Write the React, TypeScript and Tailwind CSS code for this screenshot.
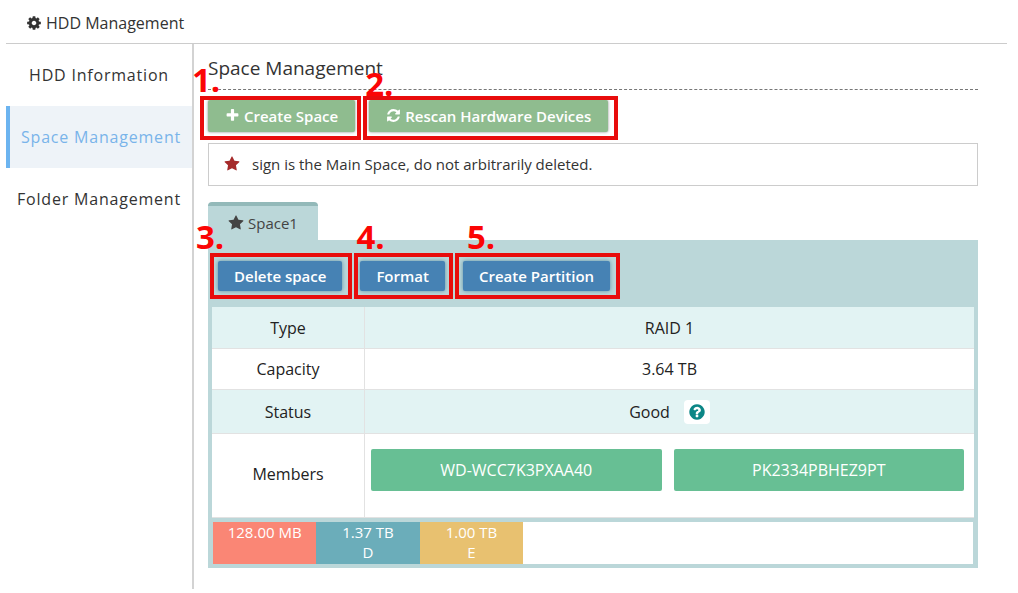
import { ReactNode } from 'react'
import clsx from 'clsx'

const icons = {
    cog: 'M1152 896q0-106-75-181t-181-75-181 75-75 181 75 181 181 75 181-75 75-181zm512-109v222q0 12-8 23t-20 13l-185 28q-19 54-39 91 35 50 107 138 10 12 10 25t-9 23q-27 37-99 108t-94 71q-12 0-26-9l-138-108q-44 23-91 38-16 136-29 186-7 28-36 28h-222q-14 0-24.5-8.5t-11.5-21.5l-28-184q-49-16-90-37l-141 107q-10 9-25 9-14 0-25-11-126-114-165-168-7-10-7-23 0-12 8-23 15-21 51-66.5t54-70.5q-27-50-41-99l-183-27q-13-2-21-12.5t-8-23.5v-222q0-12 8-23t19-13l186-28q14-46 39-92-40-57-107-138-10-12-10-24 0-10 9-23 26-36 98.5-107.5t94.5-71.5q13 0 26 10l138 107q44-23 91-38 16-136 29-186 7-28 36-28h222q14 0 24.5 8.5t11.5 21.5l28 184q49 16 90 37l142-107q9-9 24-9 13 0 25 10 129 119 165 170 7 8 7 22 0 12-8 23-15 21-51 66.5t-54 70.5q26 50 41 98l183 28q13 2 21 12.5t8 23.5z',
    star: 'M1728 647q0 22-26 48l-363 354 86 500q1 7 1 20 0 21-10.5 35.5t-30.5 14.5q-19 0-40-12l-449-236-449 236q-22 12-40 12-21 0-31.5-14.5t-10.5-35.5q0-6 2-20l86-500-364-354q-25-27-25-48 0-37 56-46l502-73 225-455q19-41 49-41t49 41l225 455 502 73q56 9 56 46z',
    plus: 'M1600 736v192q0 40-28 68t-68 28h-416v416q0 40-28 68t-68 28h-192q-40 0-68-28t-28-68v-416h-416q-40 0-68-28t-28-68v-192q0-40 28-68t68-28h416v-416q0-40 28-68t68-28h192q40 0 68 28t28 68v416h416q40 0 68 28t28 68z',
    refresh: 'M1639 1056q0 5-1 7-64 268-268 434.5t-478 166.5q-146 0-282.5-55t-243.5-157l-129 129q-19 19-45 19t-45-19-19-45v-448q0-26 19-45t45-19h448q26 0 45 19t19 45-19 45l-137 137q71 66 161 102t187 36q134 0 250-65t186-179q11-17 53-117 8-23 30-23h192q13 0 22.5 9.5t9.5 22.5zm25-800v448q0 26-19 45t-45 19h-448q-26 0-45-19t-19-45 19-45l138-138q-148-137-349-137-134 0-250 65t-186 179q-11 17-53 117-8 23-30 23h-199q-13 0-22.5-9.5t-9.5-22.5v-7q65-268 270-434.5t480-166.5q146 0 284 55.5t245 156.5l130-129q19-19 45-19t45 19 19 45z',
    question: 'M1024 1376v-192q0-14-9-23t-23-9h-192q-14 0-23 9t-9 23v192q0 14 9 23t23 9h192q14 0 23-9t9-23zm256-672q0-88-55.5-163t-138.5-116-170-41q-243 0-371 213-15 24 8 42l132 100q7 6 19 6 16 0 25-12 53-68 86-92 34-24 86-24 48 0 85.5 26t37.5 59q0 38-20 61t-68 45q-63 28-115.5 86.5t-52.5 125.5v36q0 14 9 23t23 9h192q14 0 23-9t9-23q0-19 21.5-49.5t54.5-49.5q32-18 49-28.5t46-35 44.5-48 28-60.5 12.5-81zm384 192q0 209-103 385.5t-279.5 279.5-385.5 103-385.5-103-279.5-279.5-103-385.5 103-385.5 279.5-279.5 385.5-103 385.5 103 279.5 279.5 103 385.5z',
}

function Icon({ name, className }: { name: keyof typeof icons, className?: string }) {
    return (
        <svg viewBox="0 0 1792 1792" fill="currentColor" aria-hidden="true" className={clsx('shrink-0', className)}>
            <path d={icons[name]} />
        </svg>
    )
}

// Red frame and step number that lie over a button
function Step({ label, labelClass, frameClass, children }: { label: string, labelClass: string, frameClass: string, children: ReactNode }) {
    return (
        <div className="relative">
            {children}
            <span className={clsx('pointer-events-none absolute border-4 border-[#e80c0c]', frameClass)} />
            <span className={clsx('pointer-events-none absolute z-10 text-[33px] leading-8 font-bold text-[#fb0505]', labelClass)}>{label}</span>
        </div>
    )
}

const greenButton = 'flex h-8 items-center gap-1 rounded-xs bg-[#8fbc8f] px-[17px] pb-px font-semibold text-white shadow-[0_0_3px_#888]'
const blueButton = 'flex h-[30px] items-center rounded-xs bg-[#4682b4] px-4 font-semibold text-white shadow-[0_0_4px_#5b8fa8]'

const menu = [
    { text: 'HDD Information', active: false },
    { text: 'Space Management', active: true },
    { text: 'Folder Management', active: false },
]

const partitions = [
    { size: '128.00 MB', letter: '', color: 'bg-[#fa8675]' },
    { size: '1.37 TB', letter: 'D', color: 'bg-[#6badba]' },
    { size: '1.00 TB', letter: 'E', color: 'bg-[#e8c170]' },
]

const th = 'w-[153px] border-r border-b border-[#e2e2e2] text-center font-normal'
const td = 'border-b border-[#e2e2e2] text-center'

export default function App() {
    return (
        <div className="min-h-screen bg-white pr-[11px] pb-1 pl-[6px] font-['Open_Sans','Noto_Sans',sans-serif] text-[15px] leading-5 text-[#333]">
            <header className="flex h-11 items-center gap-1 border-b border-[#ccc] pt-0.5 pl-5">
                <Icon name="cog" className="size-4" />
                <h1 className="text-base leading-5">HDD Management</h1>
            </header>

            <div className="flex">
                <nav className="min-h-[545px] w-[188px] shrink-0 border-r-2 border-[#d3d3d3] text-base">
                    {menu.map((item) => (
                        <a
                            key={item.text}
                            href="#"
                            className={clsx('flex h-[62px] items-center justify-center pb-px tracking-wider', item.active && 'border-l-4 border-[#6cb4f0] bg-[#eef3f8] text-[#79b4ea]')}
                        >
                            {item.text}
                        </a>
                    ))}
                </nav>

                <main className="min-w-0 flex-1 pt-[10px] pr-[29px] pl-[14px]">
                    <h2 className="h-9 border-b border-dashed border-[#777] text-[19px] leading-7">Space Management</h2>

                    <div className="mt-[10px] flex gap-[14px]">
                        <Step label="1." labelClass="-top-9 -left-4" frameClass="-top-1 -right-1.5 -bottom-2 -left-2">
                            <button type="button" className={greenButton}>
                                <Icon name="plus" className="size-[15px]" />Create Space
                            </button>
                        </Step>
                        <Step label="2." labelClass="-top-8 -left-1" frameClass="-top-1 -right-2.5 -bottom-2 -left-1.5">
                            <button type="button" className={greenButton}>
                                <Icon name="refresh" className="size-[15px]" />Rescan Hardware Devices
                            </button>
                        </Step>
                    </div>

                    <p className="mt-[11px] flex h-[43px] items-center gap-3 border border-[#ccc] px-[15px] pb-px">
                        <Icon name="star" className="size-4 text-[#a52a2a]" />
                        sign is the Main Space, do not arbitrarily deleted.
                    </p>

                    <div className="mt-4 flex">
                        <button type="button" className="flex h-[38px] items-center gap-1 rounded-t-sm border-t-4 border-[#93b9b9] bg-[#bbd7d9] px-5 text-[#444]">
                            <Icon name="star" className="size-4" />Space1
                        </button>
                    </div>

                    <section className="bg-[#bbd7d9] p-1">
                        <div className="flex h-[63px] items-start gap-[18px] px-[6px] pt-[17px]">
                            <Step label="3." labelClass="-top-10 -left-[22px]" frameClass="-top-2 -right-2.5 -bottom-2 -left-2">
                                <button type="button" className={blueButton}>Delete space</button>
                            </Step>
                            <Step label="4." labelClass="-top-10 -left-1" frameClass="-top-2 -right-2 -bottom-2 -left-1.5">
                                <button type="button" className={blueButton}>Format</button>
                            </Step>
                            <Step label="5." labelClass="-top-10 left-1" frameClass="-top-2 -right-2.5 -bottom-2 -left-2">
                                <button type="button" className={blueButton}>Create Partition</button>
                            </Step>
                        </div>

                        <table className="w-full border-separate border-spacing-0 bg-white text-base leading-5 text-[#222]">
                            <tbody>
                                <tr className="h-[42px] bg-[#e2f3f3]">
                                    <th scope="row" className={th}>Type</th>
                                    <td className={td}>RAID 1</td>
                                </tr>
                                <tr className="h-[41px]">
                                    <th scope="row" className={th}>Capacity</th>
                                    <td className={td}>3.64 TB</td>
                                </tr>
                                <tr className="h-11 bg-[#e2f3f3]">
                                    <th scope="row" className={th}>Status</th>
                                    <td className={td}>
                                        <div className="flex items-center justify-center gap-[14px]">
                                            Good
                                            <button type="button" aria-label="Status help" className="flex h-6 w-[26px] items-center justify-center rounded-sm bg-white text-[#0c8686]">
                                                <Icon name="question" className="size-[18px]" />
                                            </button>
                                        </div>
                                    </td>
                                </tr>
                                <tr className="h-[84px]">
                                    <th scope="row" className={clsx(th, 'pb-1')}>Members</th>
                                    <td className={clsx(td, 'pr-[10px] pb-3 pl-[6px]')}>
                                        <div className="flex gap-3">
                                            <button type="button" className="h-[42px] flex-1 rounded-xs bg-[#67bf94] text-white">WD-WCC7K3PXAA40</button>
                                            <button type="button" className="h-[42px] flex-1 rounded-xs bg-[#67bf94] text-white">PK2334PBHEZ9PT</button>
                                        </div>
                                    </td>
                                </tr>
                            </tbody>
                        </table>

                        <div className="mx-px mt-1 flex h-[42px] bg-white text-center text-white">
                            {partitions.map((part) => (
                                <div key={part.size} className={clsx('w-[13.6%]', part.color)}>
                                    <div>{part.size}</div>
                                    <div>{part.letter}</div>
                                </div>
                            ))}
                        </div>
                    </section>
                </main>
            </div>
        </div>
    )
}
